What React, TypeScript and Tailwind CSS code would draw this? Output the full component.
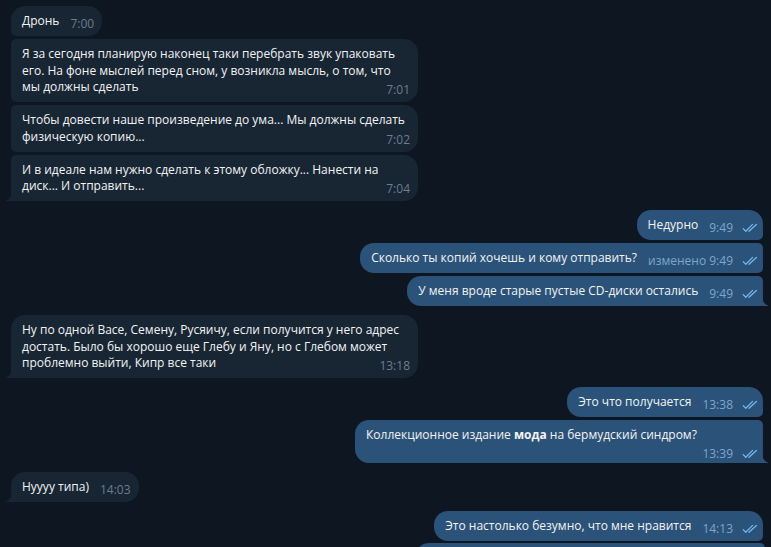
import React from "react"

type Pos = "first" | "middle" | "last" | "single"

const Checks = () => (
  <svg width="16" height="10" viewBox="0 0 16 10" fill="none" className="shrink-0">
    <path d="M1.2 5.6 L3.8 8.3 L10.6 1.4" stroke="#72b6ee" strokeWidth="1.3" strokeLinecap="round" strokeLinejoin="round" />
    <path d="M7 8.3 L14.4 1.4" stroke="#72b6ee" strokeWidth="1.3" strokeLinecap="round" strokeLinejoin="round" />
  </svg>
)

const Meta = ({ time, out, edited }: { time: string; out?: boolean; edited?: boolean }) => (
  <span
    className={`flex items-center gap-[9px] text-[12px] leading-[16.5px] translate-y-[3px] whitespace-nowrap ${
      out ? "text-[#7ea6cf]" : "text-[#6c7d8d]"
    }`}
  >
    <span>{edited ? `изменено ${time}` : time}</span>
    {out && <Checks />}
  </span>
)

const Tail = ({ out }: { out?: boolean }) =>
  out ? (
    <svg width="7" height="10" viewBox="0 0 7 10" className="absolute right-[-6px] bottom-0">
      <path d="M0 0 C0 5 2.5 8.5 7 10 L0 10 Z" fill="#2b5278" />
    </svg>
  ) : (
    <svg width="7" height="10" viewBox="0 0 7 10" className="absolute left-[-6px] bottom-0">
      <path d="M7 0 C7 5 4.5 8.5 0 10 L7 10 Z" fill="#182533" />
    </svg>
  )

const radius = (pos: Pos, out?: boolean) => {
  if (out) {
    if (pos === "first") return "rounded-[14px] rounded-br-[5px]"
    if (pos === "middle") return "rounded-[14px] rounded-tr-[5px] rounded-br-[5px]"
    if (pos === "last") return "rounded-[14px] rounded-tr-[5px] rounded-br-none"
    return "rounded-[14px] rounded-br-none"
  }
  if (pos === "first") return "rounded-[14px] rounded-bl-[5px]"
  if (pos === "middle") return "rounded-[14px] rounded-tl-[5px] rounded-bl-[5px]"
  if (pos === "last") return "rounded-[14px] rounded-tl-[5px] rounded-bl-none"
  return "rounded-[14px] rounded-bl-none"
}

type Props = {
  out?: boolean
  pos: Pos
  time: string
  edited?: boolean
  wide?: boolean
  gap: "top" | "group" | "chain"
  children: React.ReactNode
}

const gapClass = { top: "", group: "mt-[9px]", chain: "mt-[3px]" }

const Bubble = ({ out, pos, time, edited, wide, gap, children }: Props) => {
  const tail = pos === "last" || pos === "single"
  return (
    <div className={`flex ${out ? "justify-end pr-[8px]" : "justify-start pl-[11px]"} ${gapClass[gap]}`}>
      <div
        className={`relative pt-[7px] pb-[6.5px] pl-[11px] ${out ? "pr-[5px] bg-[#2b5278]" : "pr-[8px] bg-[#182533]"} ${radius(pos, out)} ${
          wide ? "w-[407px]" : ""
        } text-[12px] leading-[16.5px] text-[#f2f4f5]`}
      >
        {wide ? (
          <div>
            {children}
            <span className="float-right ml-3 h-[16.5px]">
              <Meta time={time} out={out} edited={edited} />
            </span>
          </div>
        ) : (
          <div className="flex items-baseline">
            <span className="whitespace-nowrap">{children}</span>
            <span className="ml-[11px]">
              <Meta time={time} out={out} edited={edited} />
            </span>
          </div>
        )}
        {tail && <Tail out={out} />}
      </div>
    </div>
  )
}

export default function App() {
  return (
    <div className="h-[547px] w-full overflow-hidden bg-[#0e1621] pt-[6px] font-['Open_Sans',sans-serif]">
      <Bubble pos="first" time="7:00" gap="top">
        Дронь
      </Bubble>
      <Bubble pos="middle" time="7:01" wide gap="chain">
        Я за сегодня планирую наконец таки перебрать звук упаковать
        <br />
        его. На фоне мыслей перед сном, у возникла мысль, о том, что
        <br />
        мы должны сделать
      </Bubble>
      <Bubble pos="middle" time="7:02" wide gap="chain">
        Чтобы довести наше произведение до ума... Мы должны сделать
        <br />
        физическую копию...
      </Bubble>
      <Bubble pos="last" time="7:04" wide gap="chain">
        И в идеале нам нужно сделать к этому обложку... Нанести на
        <br />
        диск... И отправить...
      </Bubble>

      <Bubble out pos="first" time="9:49" gap="group">
        Недурно
      </Bubble>
      <Bubble out pos="middle" time="9:49" edited gap="chain">
        Сколько ты копий хочешь и кому отправить?
      </Bubble>
      <Bubble out pos="last" time="9:49" gap="chain">
        У меня вроде старые пустые CD-диски остались
      </Bubble>

      <Bubble pos="single" time="13:18" wide gap="group">
        Ну по одной Васе, Семену, Русяичу, если получится у него адрес
        <br />
        достать. Было бы хорошо еще Глебу и Яну, но с Глебом может
        <br />
        проблемно выйти, Кипр все таки
      </Bubble>

      <Bubble out pos="first" time="13:38" gap="group">
        Это что получается
      </Bubble>
      <div className="mt-[3px] flex justify-end pr-[8px]">
        <div className="relative w-[408px] rounded-[14px] rounded-tr-[5px] rounded-br-none bg-[#2b5278] pt-[7px] pb-[6.5px] pl-[11px] pr-[5px] text-[12px] leading-[16.5px] text-[#f2f4f5]">
          <div className="whitespace-nowrap">
            Коллекционное издание <span className="font-bold">мода</span> на бермудский синдром?
          </div>
          <div className="flex h-[13px] justify-end">
            <span className="-translate-y-[1px]">
              <Meta time="13:39" out />
            </span>
          </div>
          <Tail out />
        </div>
      </div>

      <Bubble pos="single" time="14:03" gap="group">
        Нуууу типа)
      </Bubble>

      <Bubble out pos="first" time="14:13" gap="group">
        Это настолько безумно, что мне нравится
      </Bubble>
      <div className="mt-[2px] flex justify-end pr-[6px]">
        <div className="h-[40px] w-[350px] rounded-tl-[14px] rounded-tr-[5px] bg-[#2b5278]" />
      </div>
    </div>
  )
}
